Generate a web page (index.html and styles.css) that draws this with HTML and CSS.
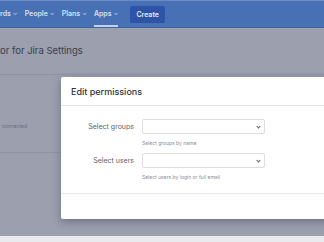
FILE: index.html
```html
<!DOCTYPE html>
<html lang="en">
<head>
    <meta charset="UTF-8">
    <meta name="viewport" content="width=device-width, initial-scale=1.0">
    <title>Jira Settings</title>
    <link rel="stylesheet" href="styles.css">
</head>
<body>
    <div class="app">
        <nav class="top-nav">
            <span class="nav-item">rds <span class="caret">&#8964;</span></span>
            <span class="nav-item">People <span class="caret">&#8964;</span></span>
            <span class="nav-item">Plans <span class="caret">&#8964;</span></span>
            <span class="nav-item active">Apps <span class="caret">&#8964;</span></span>
            <span class="create-btn">Create</span>
        </nav>

        <main class="page">
            <h1 class="page-title">or for Jira Settings</h1>
            <div class="page-divider"></div>
            <div class="page-row">
                <span class="row-text">connected</span>
            </div>
        </main>
        <div class="bottom-strip"></div>

        <div class="modal">
            <div class="modal-header">Edit permissions</div>
            <div class="modal-body">
                <div class="field">
                    <label class="field-label">Select groups</label>
                    <div class="select-box"><span class="chevron"></span></div>
                    <div class="field-help">Select groups by name</div>
                </div>
                <div class="field">
                    <label class="field-label">Select users</label>
                    <div class="select-box"><span class="chevron"></span></div>
                    <div class="field-help">Select users by login or full email</div>
                </div>
            </div>
            <div class="modal-footer"></div>
        </div>
    </div>
</body>
</html>
```

FILE: styles.css
```css
body {
    font-family: 'Inter', 'Liberation Sans', sans-serif;
    margin: 0;
    padding: 0;
    background-color: #e9eaee;
}

.app {
    width: 324px;
    height: 242px;
    overflow: hidden;
    position: relative;
    display: flex;
    flex-direction: column;
}

/* top navigation, already dimmed by the blanket */
.top-nav {
    height: 28px;
    flex-shrink: 0;
    box-sizing: border-box;
    background-color: #4870b5;
    border-top: 1px solid #6c8cc6;
    border-bottom: 1px solid #3f63a4;
    display: flex;
    align-items: center;
    column-gap: 7px;
    padding-left: 0;
}

.nav-item {
    color: #d6e0f2;
    font-size: 7px;
    font-weight: 600;
    height: 100%;
    display: flex;
    align-items: center;
    box-sizing: border-box;
    border-bottom: 2px solid transparent;
    padding-top: 1px;
}

.nav-item .caret {
    font-size: 6px;
    margin-left: 2px;
    opacity: 0.8;
    position: relative;
    top: -1px;
}

.nav-item.active {
    border-bottom-color: #c4d2ec;
}

.create-btn {
    margin-left: 5px;
    background-color: #2d54a6;
    color: #e4ebf7;
    font-size: 7px;
    font-weight: 600;
    padding: 4px 6px;
    border-radius: 2px;
}

.page {
    flex: 1;
    background-color: #9b9fae;
    display: flex;
    flex-direction: column;
}

.page-title {
    margin: 0;
    padding: 17px 0 0 0;
    font-size: 9.5px;
    font-weight: 400;
    color: #3a3e4b;
    height: 29px;
}

.page-divider {
    height: 1px;
    background-color: #8e93a3;
}

.page-row {
    height: 78px;
    border-bottom: 1px solid #8e93a3;
    display: flex;
    align-items: center;
    padding-left: 2px;
    padding-top: 24px;
    box-sizing: border-box;
}

.row-text {
    font-size: 5px;
    color: #6a6f7e;
}

.bottom-strip {
    height: 6px;
    flex-shrink: 0;
    background-color: #e9eaee;
}

/* modal dialog over the blanket */
.modal {
    position: absolute;
    left: 61px;
    top: 77px;
    width: 300px;
    height: 142px;
    background-color: #fff;
    border-radius: 2px;
    box-shadow: 0 3px 8px rgba(30, 35, 60, 0.35);
    display: flex;
    flex-direction: column;
}

.modal-header {
    height: 29px;
    box-sizing: border-box;
    border-bottom: 1px solid #e3e4e8;
    padding-left: 10px;
    display: flex;
    align-items: center;
    font-size: 9px;
    font-weight: 500;
    color: #2e3240;
}

.modal-body {
    height: 88px;
    box-sizing: border-box;
    padding-top: 13px;
    border-bottom: 1px solid #e8e9ec;
}

.field {
    display: grid;
    grid-template-columns: 73px 123px;
    column-gap: 8px;
    align-items: center;
    margin-bottom: 7px;
}

.field-label {
    text-align: right;
    font-size: 7px;
    color: #5b5f6b;
}

.select-box {
    height: 15px;
    box-sizing: border-box;
    border: 1px solid #dcdee3;
    border-radius: 2px;
    position: relative;
}

.chevron {
    position: absolute;
    right: 4px;
    top: 5px;
    width: 2px;
    height: 2px;
    border-right: 1px solid #555a66;
    border-bottom: 1px solid #555a66;
    transform: rotate(45deg);
}

.field-help {
    grid-column: 2;
    font-size: 5px;
    color: #8a8e99;
    margin-top: 6px;
    line-height: 6px;
}

.modal-footer {
    flex: 1;
}
```
